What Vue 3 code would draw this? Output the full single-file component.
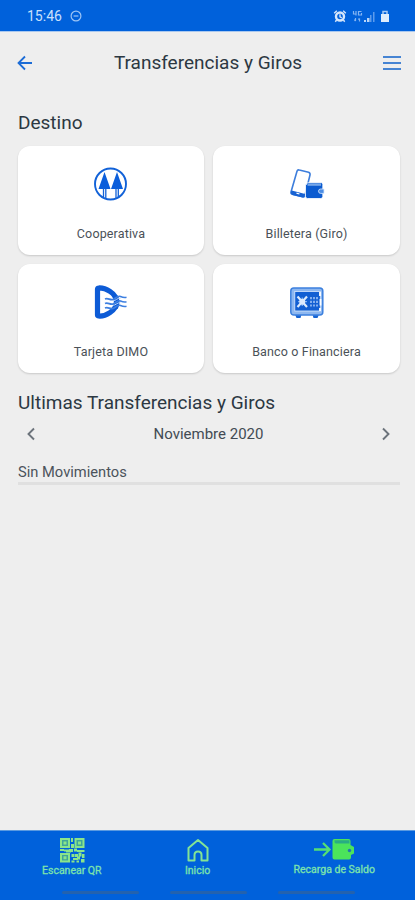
<script setup>
import { ref, computed } from 'vue'

const months = ['Enero', 'Febrero', 'Marzo', 'Abril', 'Mayo', 'Junio', 'Julio',
  'Agosto', 'Septiembre', 'Octubre', 'Noviembre', 'Diciembre']

const destinos = [
  { id: 'cooperativa', label: 'Cooperativa' },
  { id: 'billetera', label: 'Billetera (Giro)' },
  { id: 'tarjeta', label: 'Tarjeta DIMO' },
  { id: 'banco', label: 'Banco o Financiera' }
]

const month = ref(10)
const year = ref(2020)

const period = computed(() => `${months[month.value]} ${year.value}`)

const changeMonth = (step) => {
  const date = new Date(year.value, month.value + step, 1)
  month.value = date.getMonth()
  year.value = date.getFullYear()
}
</script>

<template>
  <div class="screen">
    <div class="status-bar">
      <span class="clock">15:46</span>
      <svg class="dnd" width="12" height="12" viewBox="0 0 12 12">
        <circle cx="6" cy="6" r="4.9" />
        <path d="M3.6 6h4.8" />
      </svg>
      <svg class="status-icons" width="60" height="14" viewBox="0 0 60 14">
        <circle cx="7" cy="7.5" r="4" fill="none" stroke="#d5e6fb" stroke-width="2.4" />
        <path d="M7 5.3v2.5l1.8 1M1.2 4.2l2.6-2.4M12.8 4.2l-2.6-2.4M3.6 11l-1.3 1.7M10.4 11l1.3 1.7" fill="none" stroke="#d5e6fb" stroke-width="1.4" />
        <path d="M20.500 2v3h3M23 2v4.500M28.500 2.500h-3v3.500h3v-2M22.500 9v3M21.300 10.700l1.200 1.300M26.500 12.500v-3M25.300 10.500l1.200-1" fill="none" stroke="#83b4f2" stroke-width="1.2" />
        <path d="M31 13v-2h2v2zM34 13v-4h2.500v4z" fill="#b9d5f8" />
        <path d="M37 13v-7h1.500v7zM40 13v-10h1.500v10z" fill="#5c9bec" />
        <path d="M48 5h8v8h-8z" fill="#e0edfc" />
        <path d="M50 5v-2.500h4v2.500" fill="none" stroke="#a9cbf6" stroke-width="1.5" />
      </svg>
    </div>

    <header class="header">
      <button class="icon-btn" aria-label="Volver">
        <svg width="16" height="16" viewBox="0 0 16 16">
          <path d="M8 1.5L1.5 8L8 14.5M2 8h13" fill="none" stroke="#1c6cd6" stroke-width="1.8" />
        </svg>
      </button>
      <h1>Transferencias y Giros</h1>
      <button class="icon-btn" aria-label="Menu">
        <svg width="18" height="16" viewBox="0 0 18 16">
          <path d="M0 2h18M0 8h18M0 14h18" stroke="#4684d3" stroke-width="2" />
        </svg>
      </button>
    </header>

    <main class="content">
      <h2 class="destino-title">Destino</h2>
      <div class="cards">
        <button v-for="destino in destinos" :key="destino.id" class="card">
          <svg v-if="destino.id === 'cooperativa'" width="36" height="36" viewBox="0 0 36 36">
            <circle cx="17.5" cy="18" r="15.5" fill="none" stroke="#1262d8" stroke-width="1.9" />
            <path d="M11.5 6L17.5 23H5.500zM24 6L30 23H18z" fill="#0b5edb" />
            <path d="M10.500 22v9.500M12.800 22v10M23 22v10M25.300 22v9.500" stroke="#1262d8" stroke-width="1.3" />
          </svg>

          <svg v-else-if="destino.id === 'billetera'" width="36" height="36" viewBox="0 0 36 36">
            <path d="M8 5.3Q8.5 3.500 10.300 4L19.500 6.300Q21.500 7 21 9L16 29.300Q15.500 31.300 13.500 30.800L3.300 28.300Q1.500 27.800 2 26z" fill="#fff" stroke="#3d7edc" stroke-width="1.6" />
            <path d="M2.700 24.500L16.200 28L15.500 30.300Q15 31.800 13.500 31.400L3.300 28.900Q1.500 28 2 26z" fill="#1762d3" />
            <path d="M7.500 27.200l3 .8" stroke="#fff" stroke-width="1.2" />
            <path d="M17.500 18.500Q17.500 16.500 19.500 16.500H32Q33.800 16.500 33.800 18.500V30.500Q33.800 32.500 31.800 32.500H18.500Q16.500 32.500 16.500 30.500V18.500z" fill="#0b5bd0" stroke="#fff" stroke-width=".8" />
            <path d="M18.500 17.300h13.500v2.500h-13.500z" fill="#76a7e9" />
            <path d="M35 23h-3.300a2.200 2.200 0 0 0 0 4.400h3.300z" fill="#4b8de4" stroke="#dceafd" stroke-width=".8" />
          </svg>

          <svg v-else-if="destino.id === 'tarjeta'" width="36" height="36" viewBox="0 0 36 36">
            <path d="M4.500 5Q4.500 4 5.500 4C12 3.500 23.500 9 23.500 18S12 32.700 5.500 32Q4.500 32 4.500 31z" fill="none" stroke="#0d5bd6" stroke-width="5.200" stroke-linejoin="round" />
            <path d="M22.500 12.500Q25.500 17.500 22.500 24" fill="none" stroke="#0d5bd6" stroke-width="5" />
            <g fill="none" stroke="#bcd6f8" stroke-width="1">
              <path d="M20 16.800c3 0 4-3 7.500-2.500M20 21.300c3 0 4-3 7.500-2.500" />
            </g>
            <g fill="none" stroke="#3d7fe0" stroke-width="1.700">
              <path d="M12 15c3-1.500 5 1.500 8 .5s4.500-4.300 7.500-3 4 1.300 6 .8M12 19.500c3-1.500 5 1.500 8 .5s4.500-4.300 7.500-3 4 1.300 6 .8M12 24c3-1.500 5 1.500 8 .5s4.500-4.300 7.500-3 4 1.300 6 .8" />
            </g>
          </svg>

          <svg v-else width="36" height="36" viewBox="0 0 36 36">
            <path d="M6 30.500h6.500l-1 3.500H7.500zM23.500 30.500H30l-1.500 3.500h-4z" fill="#1664d4" />
            <rect x="1.800" y="4" width="32" height="27" rx="3" fill="#8db7f0" stroke="#3c80de" stroke-width="1.500" />
            <rect x="5.800" y="7.500" width="25.500" height="19.500" fill="#125fd3" stroke="#dceafd" stroke-width=".8" />
            <path d="M8.500 12.500l9.500 10.500M18 12.500l-9.500 10.500" stroke="#dceafd" stroke-width="2.200" />
            <path d="M9 17.700h9M13.250 13.500v8.500" stroke="#7fb0f2" stroke-width="1.300" />
            <circle cx="13.250" cy="17.700" r="3" fill="#dceafd" />
            <path d="M22 13v10M25 13v10M28 13v10" stroke="#a6c8f7" stroke-width="1.500" stroke-dasharray="2.200 1.500" />
            <path d="M31 8v4M31.500 15v6.500M31 24v3" stroke="#fff" stroke-width="1.800" />
          </svg>
          <span>{{ destino.label }}</span>
        </button>
      </div>

      <h2 class="ultimas-title">Ultimas Transferencias y Giros</h2>
      <div class="period">
        <button class="icon-btn" aria-label="Mes anterior" @click="changeMonth(-1)">
          <svg width="8" height="14" viewBox="0 0 8 14">
            <path d="M7 1.5L1.500 7L7 12.500" fill="none" stroke="#6c737b" stroke-width="1.9" />
          </svg>
        </button>
        <span class="period-label">{{ period }}</span>
        <button class="icon-btn" aria-label="Mes siguiente" @click="changeMonth(1)">
          <svg width="8" height="14" viewBox="0 0 8 14">
            <path d="M1 1.5L6.500 7L1 12.500" fill="none" stroke="#6c737b" stroke-width="1.9" />
          </svg>
        </button>
      </div>
      <p class="empty"><span>Sin Movimientos</span></p>
    </main>

    <nav class="bottom-nav">
      <div class="tabs">
        <button class="tab tab-qr">
          <svg width="26" height="26" viewBox="0 0 26 26">
            <g fill="#3fa69a" stroke="#8be58a" stroke-width="2">
              <path d="M2 2h8v8H2zM16.500 2H24.500v8h-8zM2 17h8v7.500H2z" />
            </g>
            <g fill="#8be58a">
              <path d="M4.500 4.500h3v3H4.500zM19 4.500h3v3H19zM4.500 19.300h3v3H4.500z" />
              <path d="M12 1h2v4h-2zM12 7h3v4h-3zM1 12h4v2H1zM5 12.500h5v2H5zM10 12h4v3h-4zM15 11.500h3v3h-3zM18 13h7.500v2h-7.500zM7 14h5v1.500H7zM12.500 17h3v3h-3zM16 17h3v3h-3zM19.500 15.500h3v4h-3zM23 17h2.500v4H23zM14 21h5v2h-5zM18 19.500h3v3h-3zM12.500 23.500h3v2h-3zM17.500 23.500h2.500v2h-2.500zM22 22h3.500v3.500h-3.500z" />
            </g>
          </svg>
          <span>Escanear QR</span>
        </button>
        <button class="tab tab-inicio">
          <svg width="26" height="26" viewBox="0 0 26 26">
            <path d="M3.500 11L13 3L22.500 11V23.500H16.500V18Q16.500 14.500 13 14.500T9.500 18V23.500H3.500z" fill="none" stroke="#83e495" stroke-width="2" stroke-linejoin="round" />
          </svg>
          <span>Inicio</span>
        </button>
        <button class="tab tab-recarga">
          <svg width="42" height="25" viewBox="0 0 42 25">
            <path d="M1 12.500h15M10 6l6.500 6.500L10 19" fill="none" stroke="#54df74" stroke-width="2.300" />
            <path d="M19.500 4Q19.500 2 21.500 2H35.500Q37.500 2 37.500 4V8L41 10V16.500L38 18V20.500Q38 22.500 36 22.500H21.500Q19.500 22.500 19.500 20.500z" fill="#4be45b" />
            <path d="M21.500 3.300H36.500V6.500H23.500Q21.500 6.500 21.500 5z" fill="#28ad83" />
            <circle cx="36.500" cy="13.500" r="1.700" fill="#2077b0" />
          </svg>
          <span>Recarga de Saldo</span>
        </button>
      </div>
      <div class="gesture-bars">
        <i></i><i></i><i></i>
      </div>
    </nav>
  </div>
</template>

<style>
body {
  margin: 0;
}
</style>

<style scoped>
.screen {
  display: flex;
  flex-direction: column;
  width: 415px;
  height: 900px;
  overflow: hidden;
  background: #eeeeee;
  color: #2c3842;
  font-family: Roboto, "Liberation Sans", sans-serif;
}

button {
  padding: 0;
  border: none;
  background: none;
  color: inherit;
  font-family: inherit;
  cursor: pointer;
}

svg {
  display: block;
  flex: none;
}

.status-bar {
  display: flex;
  align-items: center;
  box-sizing: border-box;
  height: 32px;
  flex: none;
  padding: 1px 22px 0 27px;
  border-bottom: 1px solid #a9c8ef;
  background: #0061db;
  color: #c9e0fb;
}

.clock {
  width: 43px;
  font-size: 14px;
}

.dnd {
  fill: none;
  stroke: #9cc4f5;
  stroke-width: 1.2;
}

.status-icons {
  margin-left: auto;
}

.header {
  display: flex;
  align-items: center;
  justify-content: space-between;
  height: 61px;
  flex: none;
  padding: 0 14px 0 17px;
}

h1,
h2 {
  margin: 0;
  font-weight: 400;
  white-space: nowrap;
}

h1 {
  padding-top: 1px;
  font-size: 19px;
  line-height: 24px;
}

.content {
  flex: 1;
  padding: 18px 15px 0 18px;
}

h2 {
  font-size: 19px;
  line-height: 24px;
}

.cards {
  display: grid;
  grid-template-columns: 186px 187px;
  grid-auto-rows: 109px;
  gap: 9px;
  margin: 11px 0 18px;
}

.card {
  display: flex;
  flex-direction: column;
  align-items: center;
  justify-content: space-between;
  box-sizing: border-box;
  padding: 20px 0 13px;
  border-radius: 12px;
  background: #fff;
  box-shadow: 0 1px 2px rgba(0, 0, 0, 0.16);
}

.card span {
  color: #4a5157;
  font-size: 12.5px;
  letter-spacing: 0.15px;
  line-height: 16px;
}

.period {
  display: flex;
  align-items: center;
  justify-content: space-between;
  height: 37px;
  padding: 0 10px 0 9px;
}

.period-label {
  color: #424b54;
  font-size: 15px;
}

.empty {
  margin: 11px 0 0;
  padding-bottom: 1px;
  border-bottom: 3px solid #e0e0e0;
  color: #4b535b;
  font-size: 14.7px;
  line-height: 18px;
}

.bottom-nav {
  display: flex;
  flex-direction: column;
  justify-content: space-between;
  box-sizing: border-box;
  height: 70px;
  flex: none;
  padding: 6px 0 6px;
  border-top: 1px solid #5b9ae0;
  background: #0061db;
}

.tabs {
  display: flex;
  justify-content: space-between;
  padding: 0 40px 0 42px;
}

.tab {
  display: flex;
  flex-direction: column;
  align-items: center;
  color: #7ee3ab;
  font-size: 10.5px;
  line-height: 14px;
}

.tab span {
  padding-top: 1px;
  white-space: nowrap;
  -webkit-text-stroke: 0.3px currentColor;
}

.gesture-bars {
  display: flex;
  gap: 31px;
  margin-left: 62px;
}

.gesture-bars i {
  width: 77px;
  height: 3px;
  border-radius: 2px;
  background: #2362ae;
}
</style>
